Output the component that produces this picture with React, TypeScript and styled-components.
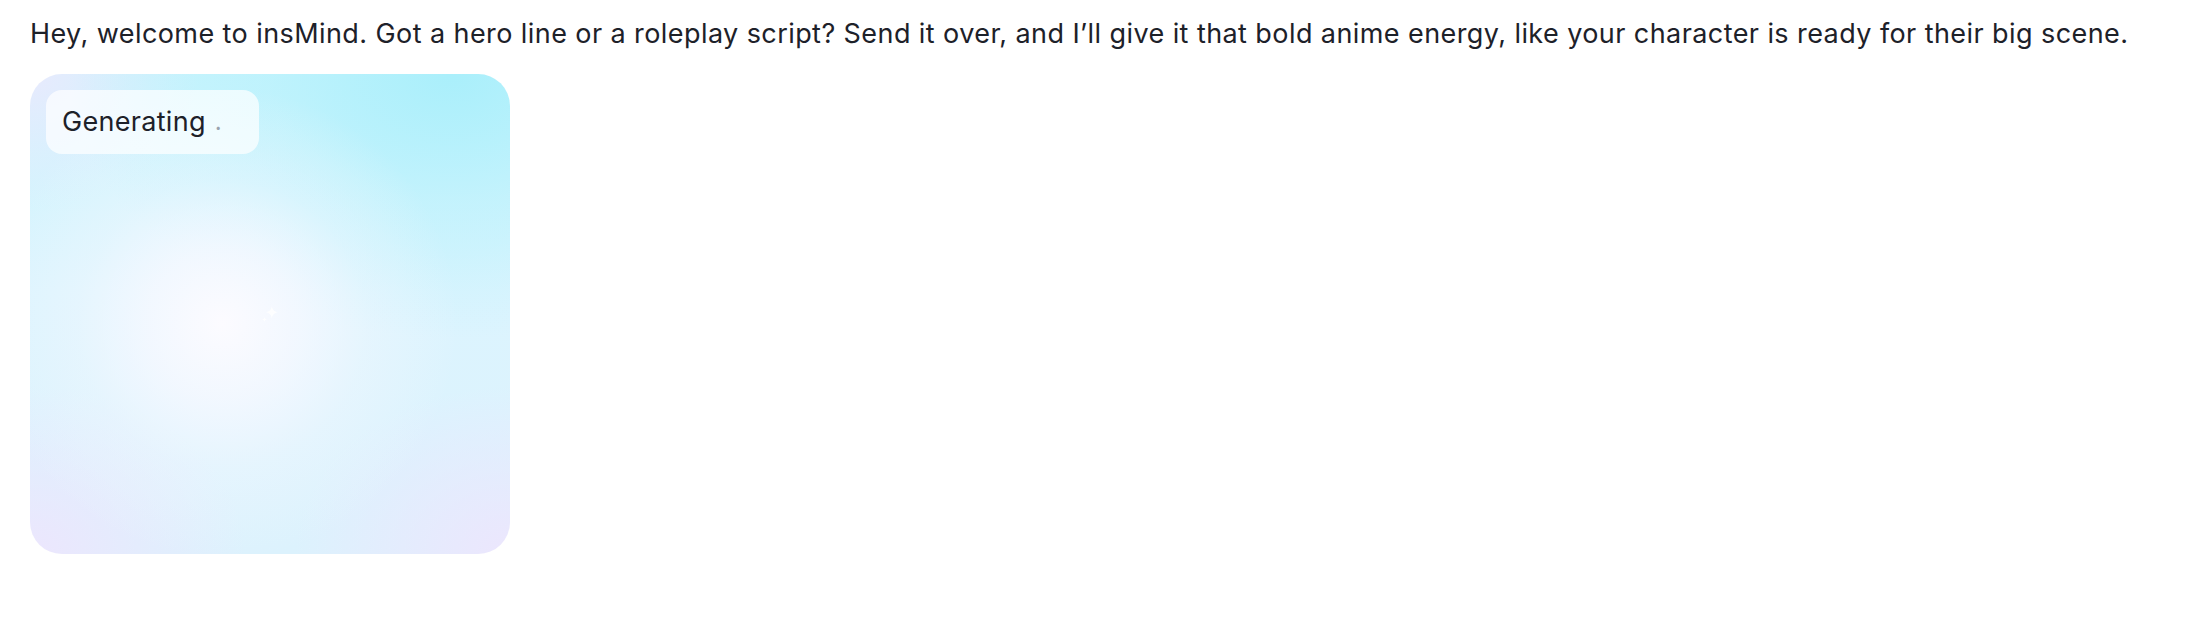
import React from "react";
import styled, { createGlobalStyle } from "styled-components";

const GlobalStyle = createGlobalStyle`
  html, body {
    margin: 0;
    padding: 0;
    background: #ffffff;
  }
  body {
    font-family: Inter, "Noto Sans", "Noto Sans CJK SC", sans-serif;
    color: #1d2129;
    -webkit-font-smoothing: antialiased;
  }
`;

const Page = styled.div`
  display: flex;
  flex-direction: column;
  align-items: flex-start;
  gap: 22px;
  padding: 16px 30px 0 30px;
`;

const Message = styled.p`
  margin: 0;
  font-size: 27px;
  line-height: 36px;
  letter-spacing: 0.42px;
  font-weight: 400;
  color: #1d2129;
  white-space: nowrap;
`;

const Card = styled.div`
  position: relative;
  box-sizing: border-box;
  width: 480px;
  height: 480px;
  border-radius: 32px;
  padding: 16px;
  display: flex;
  flex-direction: column;
  align-items: flex-start;
  overflow: hidden;
  background:
    radial-gradient(circle at 40% 52%, rgba(252, 251, 255, 1) 0%, rgba(249, 249, 255, 0.75) 20%, rgba(246, 248, 255, 0.35) 38%, rgba(246, 248, 255, 0) 62%),
    radial-gradient(ellipse 80% 55% at 88% 0%, rgba(170, 239, 251, 1) 0%, rgba(178, 241, 252, 0.5) 48%, rgba(190, 243, 252, 0) 100%),
    radial-gradient(ellipse 45% 35% at 0% 100%, rgba(236, 230, 253, 1) 0%, rgba(236, 230, 253, 0) 100%),
    radial-gradient(ellipse 45% 35% at 100% 100%, rgba(236, 230, 253, 1) 0%, rgba(236, 230, 253, 0) 100%),
    radial-gradient(ellipse 35% 28% at 0% 0%, rgba(232, 234, 253, 1) 0%, rgba(232, 234, 253, 0) 100%),
    linear-gradient(180deg, #cbf4fd 0%, #dcf4fe 45%, #dcf2fd 100%);
`;

const StatusPill = styled.div`
  display: flex;
  align-items: center;
  padding: 16px 16px;
  border-radius: 16px;
  background: rgba(255, 255, 255, 0.7);
  font-size: 27px;
  line-height: 32px;
  letter-spacing: 0.3px;
  color: #1d2129;
`;

const Dots = styled.span`
  display: inline-block;
  width: 28px;
  margin-left: 9px;
  color: #9aa3ad;
  font-size: 24px;
  line-height: 32px;
`;

const Sparkle = styled.svg`
  position: absolute;
  left: 50%;
  top: 50%;
  width: 22px;
  height: 22px;
  transform: translate(-50%, -50%);
  opacity: 0.85;
`;

export default function App() {
  return (
    <>
      <GlobalStyle />
      <Page>
        <Message>
          Hey, welcome to insMind. Got a hero line or a roleplay script? Send it over, and I’ll give it that bold anime energy, like your character is ready for their big scene.
        </Message>
        <Card>
          <StatusPill>
            Generating
            <Dots>.</Dots>
          </StatusPill>
          <Sparkle viewBox="0 0 24 24">
            <path
              d="M14 3 C14.6 7.4 16.6 9.4 21 10 C16.6 10.6 14.6 12.6 14 17 C13.4 12.6 11.4 10.6 7 10 C11.4 9.4 13.4 7.4 14 3 Z"
              fill="#ffffff"
            />
            <path
              d="M6 15 C6.3 17 7 17.7 9 18 C7 18.3 6.3 19 6 21 C5.7 19 5 18.3 3 18 C5 17.7 5.7 17 6 15 Z"
              fill="#ffffff"
            />
          </Sparkle>
        </Card>
      </Page>
    </>
  );
}
